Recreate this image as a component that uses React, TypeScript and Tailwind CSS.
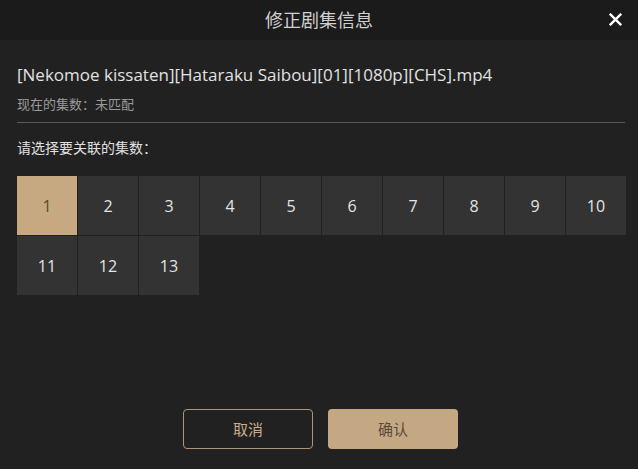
import React from "react";

export default function App() {
  const eps = Array.from({ length: 13 }, (_, i) => i + 1);
  return (
    <div
      className="w-[638px] h-[469px] bg-[#212121] flex flex-col overflow-hidden"
      style={{ fontFamily: '"Open Sans", "Noto Sans CJK SC", sans-serif' }}
    >
      <div className="h-[40px] bg-[#1b1b1b] flex items-center justify-center relative shrink-0">
        <span className="text-[18px] text-[#d0d0d0]">修正剧集信息</span>
        <svg
          className="absolute right-[16px] top-[13px]"
          width="13"
          height="13"
          viewBox="0 0 12 12"
        >
          <path d="M1.5 1.5 L10.5 10.5 M10.5 1.5 L1.5 10.5" stroke="#ffffff" strokeWidth="2.2" strokeLinecap="square" />
        </svg>
      </div>
      <div className="flex flex-col px-[17px] pt-[23px] flex-1">
        <div className="text-[17px] leading-[24px] text-[#e2e2e2]">
          [Nekomoe kissaten][Hataraku Saibou][01][1080p][CHS].mp4
        </div>
        <div className="text-[13px] leading-[18px] text-[#9a9a9a] mt-[8px]">现在的集数：未匹配</div>
        <div className="h-px bg-[#5a5a5a] w-[608px] mt-[9px]" />
        <div className="text-[14px] leading-[18px] text-[#e0e0e0] mt-[16px]">请选择要关联的集数：</div>
        <div className="grid grid-cols-[repeat(10,60px)] gap-px mt-[19px] w-[609px]">
          {eps.map((n) => (
            <div
              key={n}
              className={
                n === 1
                  ? "h-[59px] flex items-center justify-center bg-[#c7a981] text-[#5a4632] text-[16px]"
                  : "h-[59px] flex items-center justify-center bg-[#333333] text-[#e4e4e4] text-[16px]"
              }
            >
              {n}
            </div>
          ))}
        </div>
        <div className="flex-1" />
        <div className="flex justify-center gap-[15px] mb-[20px] pl-[3px]">
          <button className="w-[130px] h-[40px] rounded-[4px] border border-[#a8977d] text-[#c9ad88] text-[15px] bg-transparent">
            取消
          </button>
          <button className="w-[130px] h-[40px] rounded-[4px] bg-[#c4a783] text-[#5a4a3a] text-[15px]">
            确认
          </button>
        </div>
      </div>
    </div>
  );
}
